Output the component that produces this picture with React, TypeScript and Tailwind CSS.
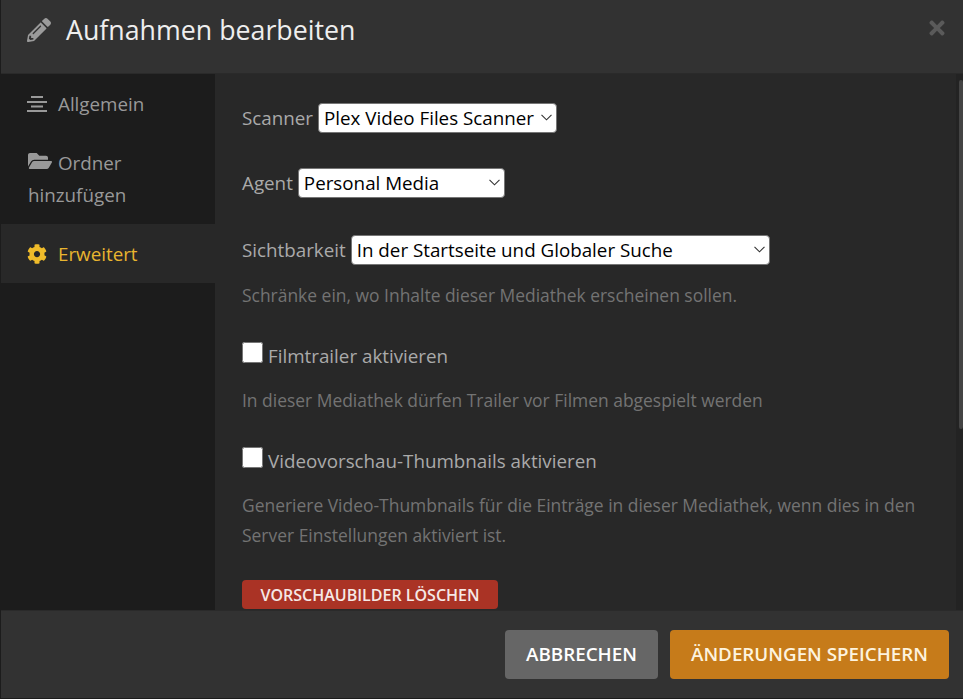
import { FaPencilAlt, FaFolderOpen, FaCog, FaTimes } from "react-icons/fa";

const Chevron = () => (
  <svg className="absolute right-[5px] top-[11px] pointer-events-none" width="11" height="7" viewBox="0 0 11 7" fill="none">
    <path d="M0.5 0.8 L5.5 5.8 L10.5 0.8" stroke="#333333" strokeWidth="1.1" />
  </svg>
);

const LinesIcon = () => (
  <svg width="20" height="16" viewBox="0 0 20 16" fill="#999999" className="shrink-0">
    <rect x="4" y="0" width="12" height="2" />
    <rect x="0" y="5" width="20" height="2" />
    <rect x="4" y="9.5" width="12" height="2" />
    <rect x="0" y="14" width="20" height="2" />
  </svg>
);

const Select = ({ width, label }: { width: string; label: string }) => (
  <div className={`relative h-[30px] ${width}`}>
    <select className="w-full h-[30px] appearance-none bg-white text-black border border-[#767676] rounded-[4px] pl-[5px] text-[18.8px]">
      <option>{label}</option>
    </select>
    <Chevron />
  </div>
);

const App: React.FC = () => {
  return (
    <div className="w-[963px] h-[699px] overflow-hidden flex flex-col bg-[#282828] border-l border-[#1c1c1c] font-['Open_Sans',sans-serif]">
      <header className="h-[74px] shrink-0 flex items-start justify-between bg-[#323232] border-b border-[#2a2a2a] pl-[26px] pr-[15px] pt-[12px]">
        <div className="flex items-center gap-[15px]">
          <FaPencilAlt className="text-[24px] text-[#9b9b9b]" />
          <h1 className="text-[26.75px] leading-[36px] text-[#eeeeee]">Aufnahmen bearbeiten</h1>
        </div>
        <FaTimes className="text-[22px] text-[#5a5a5a] mt-[5px]" />
      </header>

      <div className="flex flex-1 min-h-0">
        <nav className="w-[214px] shrink-0 bg-[#1c1c1c] text-[18.8px] text-[#999999]">
          <div className="h-[60px] pl-[26px] flex items-center gap-[11px]">
            <LinesIcon />
            <span>Allgemein</span>
          </div>
          <div className="h-[90px] pl-[27px] pt-[13px] leading-[32px]">
            <FaFolderOpen className="inline text-[24px] mr-[6px] align-[-3px]" />
            Ordner
            <br />
            hinzufügen
          </div>
          <div className="h-[59px] pl-[26px] pt-[1px] flex items-center gap-[11px] bg-[#282828] text-[#e8b52f]">
            <FaCog className="text-[20px] text-[#f0bc2a]" />
            <span>Erweitert</span>
          </div>
        </nav>

        <main className="flex-1 min-w-0 overflow-hidden pl-[27px] pt-[29px] text-[#aaaaaa] text-[18.8px]">
          <div className="flex items-center gap-[5px] h-[30px]">
            <label>Scanner</label>
            <Select width="w-[239px]" label="Plex Video Files Scanner" />
          </div>
          <div className="flex items-center gap-[5px] h-[30px] mt-[35px]">
            <label>Agent</label>
            <Select width="w-[207px]" label="Personal Media" />
          </div>
          <div className="flex items-center gap-[5px] h-[30px] mt-[37px]">
            <label>Sichtbarkeit</label>
            <Select width="w-[419px]" label="In der Startseite und Globaler Suche" />
          </div>
          <p className="mt-[18px] text-[17.44px] leading-[24px] text-[#737373]">Schränke ein, wo Inhalte dieser Mediathek erscheinen sollen.</p>

          <div className="flex items-center gap-[5px] mt-[36px] h-[26px]">
            <input type="checkbox" className="w-[21px] h-[21px] m-0 mb-[8px]" />
            <label>Filmtrailer aktivieren</label>
          </div>
          <p className="mt-[19px] text-[17.44px] leading-[24px] text-[#737373]">In dieser Mediathek dürfen Trailer vor Filmen abgespielt werden</p>

          <div className="flex items-center gap-[5px] mt-[36px] h-[26px]">
            <input type="checkbox" className="w-[21px] h-[21px] m-0 mb-[8px]" />
            <label>Videovorschau-Thumbnails aktivieren</label>
          </div>
          <p className="mt-[16px] text-[17.44px] leading-[30px] text-[#737373] w-[690px]">
            Generiere Video-Thumbnails für die Einträge in dieser Mediathek, wenn dies in den Server Einstellungen aktiviert ist.
          </p>

          <button className="mt-[30px] w-[256px] h-[29px] bg-[#aa3325] text-[#f5e8e6] rounded-[4px] text-[16px] font-semibold">VORSCHAUBILDER LÖSCHEN</button>
        </main>

        <div className="w-[7px] shrink-0 bg-[#232323] pt-[6px]">
          <div className="w-[4px] ml-[3px] h-[349px] bg-[#444444] rounded-[3px]"></div>
        </div>
      </div>

      <footer className="h-[89px] shrink-0 flex items-start justify-end gap-[12px] bg-[#323232] border-t border-[#2a2a2a] border-b-[#1c1c1c] border-b pt-[19px] pr-[14px]">
        <button className="w-[153px] h-[49px] bg-[#666666] text-white rounded-[4px] text-[18.8px] font-semibold">ABBRECHEN</button>
        <button className="w-[279px] h-[49px] bg-[#c67b1a] text-[#fdf3df] rounded-[4px] text-[18.8px] font-semibold">ÄNDERUNGEN SPEICHERN</button>
      </footer>
    </div>
  );
};

export default App;
